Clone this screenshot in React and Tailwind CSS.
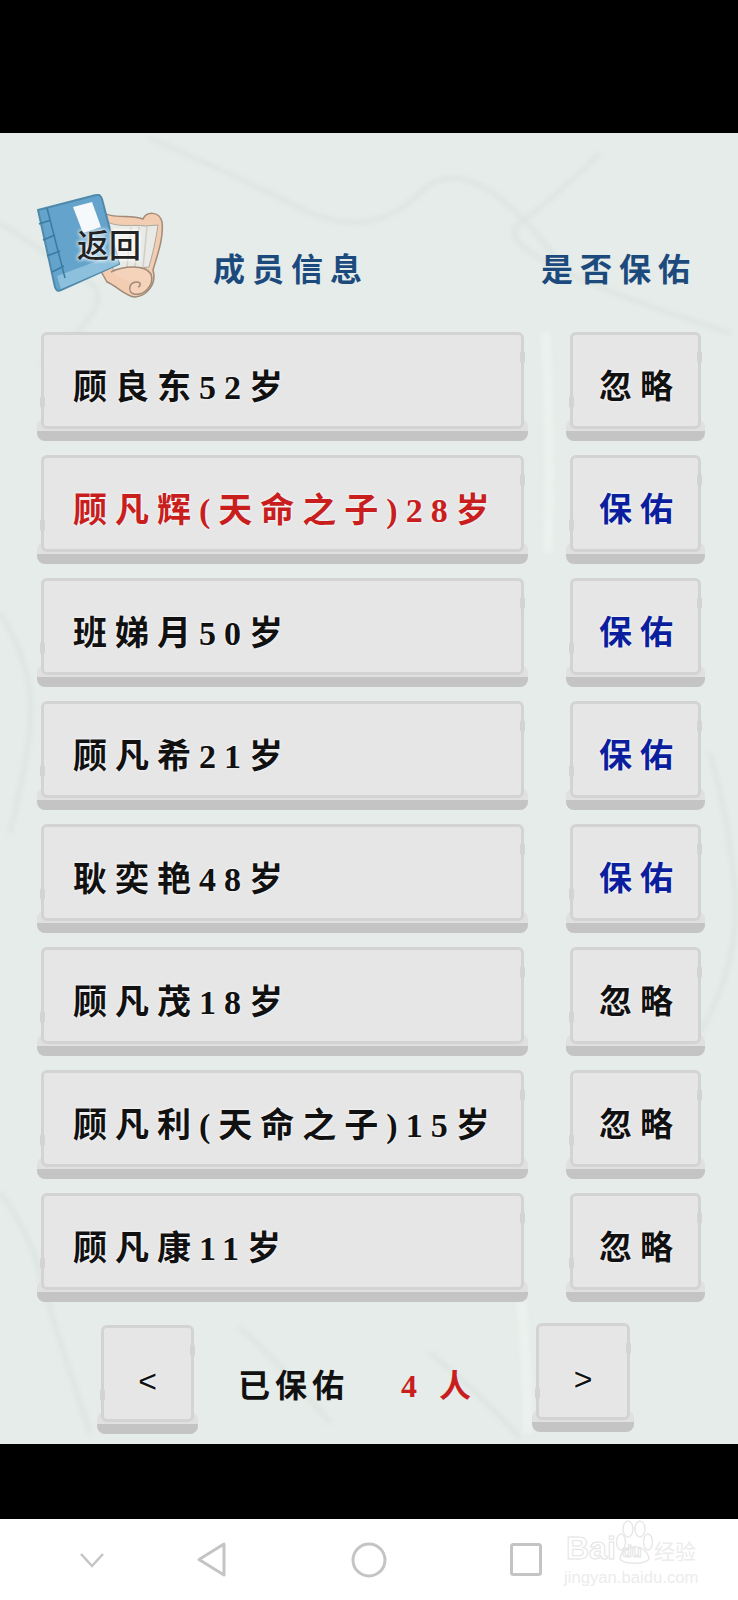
const CJK = "font-['Liberation_Serif','Noto_Sans_CJK_SC',serif]";

const rows = [
  { name: '顾良东52岁', action: '忽略' },
  { name: '顾凡辉(天命之子)28岁', action: '保佑', red: true },
  { name: '班娣月50岁', action: '保佑' },
  { name: '顾凡希21岁', action: '保佑' },
  { name: '耿奕艳48岁', action: '保佑' },
  { name: '顾凡茂18岁', action: '忽略' },
  { name: '顾凡利(天命之子)15岁', action: '忽略' },
  { name: '顾凡康11岁', action: '忽略' },
];

function Key({ className, children }) {
  return (
    <div className={'flex flex-col items-stretch ' + className}>
      <div className="relative z-10 mx-[4px] flex h-[97px] items-center rounded-[6px] border-[3px] border-[#d2d3d2] bg-[#e6e6e6]">
        <span className="absolute -right-[4px] top-[16px] h-[12px] w-[5px] rounded-full bg-[#d2d3d2]" />
        <span className="absolute -left-[4px] bottom-[18px] h-[12px] w-[5px] rounded-full bg-[#d2d3d2]" />
        {children}
      </div>
      <div className="-mt-[10px] h-[22px] rounded-[8px] border-t-[12px] border-[#dfe0df] bg-[#c3c4c3]" />
    </div>
  );
}

function Book() {
  return (
    <div className="relative h-[100px] w-[128px]">
      <svg width="128" height="106" viewBox="0 0 128 106" className="absolute left-0 top-0" fill="none">
        {/* scroll behind the book */}
        <path d="M60 16 C75 26 92 20 106 25 C109 18 122 16 125 28 C127 44 120 62 116 76 C120 90 110 102 98 103 C88 102 80 92 70 88 L60 70 Z" fill="#f2cdb2" stroke="#a08a78" strokeWidth="1.5" />
        <path d="M70 28 C84 34 96 30 108 32 L121 31 C119 46 115 62 112 73 L76 76 Z" fill="#e9e9e5" stroke="#a9a9a0" strokeWidth="1" />
        <path d="M94 33 L90 74 M102 33 L98 74 M110 33 L106 74" stroke="#cfcfc8" strokeWidth="1.5" />
        <path d="M74 78 C86 72 108 70 114 80 C118 92 106 102 97 100 C90 98 92 88 100 88 C104 88 104 92 101 93" fill="#f4d3ba" stroke="#a08a78" strokeWidth="1.5" />
        {/* book */}
        <path d="M1 16 L59 1 C62 0 64 2 65 5 L82 70 L24 96 C21 98 19 96 18 93 Z" fill="#64a3cb" stroke="#4f89ab" strokeWidth="2" />
        <path d="M20 82 L79 60 L82 70 L24 95 Z" fill="#8cc0dc" />
        <path d="M10 14 L28 84 M2 30 L14 26 M6 46 L18 41 M10 62 L23 57 M15 78 L27 72" stroke="#3a7ba2" strokeWidth="1.5" />
        <path d="M36 13 L55 8 L64 33 L46 39 Z" fill="#f6f9fb" />
      </svg>
      <span className="absolute left-[40px] top-[33px] text-[32px] font-medium leading-none text-[#222] [font-family:'Noto_Sans_CJK_SC',sans-serif] [text-shadow:0_0_4px_#fff,0_0_4px_#fff]">
        返回
      </span>
    </div>
  );
}

function BaiduMark() {
  return (
    <div className="relative h-[66px] w-[136px] text-[#ececec]">
      <svg width="38" height="44" viewBox="0 0 38 44" className="absolute left-[49px] top-0" fill="none" stroke="#e8e8e8" strokeWidth="1.5">
        <ellipse cx="6" cy="22" rx="4.5" ry="8" />
        <ellipse cx="13" cy="9" rx="5" ry="8" />
        <ellipse cx="25" cy="9" rx="5" ry="8" />
        <ellipse cx="33" cy="22" rx="4.5" ry="8" />
        <path d="M5 38 C8 24 30 22 34 38 C34 45 5 45 5 38 Z" />
      </svg>
      <span className="absolute left-0 top-[12px] text-[32px] font-bold leading-none text-transparent [-webkit-text-stroke:1px_#e4e4e4] [font-family:'Liberation_Sans',sans-serif]">Bai</span>
      <span className="absolute left-[56px] top-[24px] text-[16px] font-bold leading-none text-transparent [-webkit-text-stroke:1px_#e4e4e4] [font-family:'Liberation_Sans',sans-serif]">du</span>
      <span className="absolute left-[88px] top-[20px] text-[21px] leading-none [font-family:'Noto_Sans_CJK_SC',sans-serif]">经验</span>
      <span className="absolute -left-[2px] top-[50px] text-[16.7px] leading-none [font-family:'Liberation_Sans',sans-serif]">jingyan.baidu.com</span>
    </div>
  );
}

export default function App() {
  return (
    <div className={'flex h-[1600px] w-[738px] flex-col bg-black ' + CJK}>
      <div className="h-[133px]" />

      <main className="relative h-[1311px] overflow-hidden bg-[#e5ece9]">
        {/* paper texture */}
        <svg width="738" height="1311" viewBox="0 0 738 1311" className="absolute left-0 top-0 blur-[2px]" fill="none" stroke="#dae3df" strokeWidth="3">
          <path d="M150 5 Q230 40 300 75 T420 60 T560 130" />
          <path d="M0 90 Q60 130 90 150 T40 230" />
          <path d="M600 20 Q560 60 520 90 T730 200" />
          <path d="M0 480 Q25 520 30 560 T10 700" />
          <path d="M710 620 Q730 690 735 760 T700 900" />
          <path d="M0 1060 Q30 1100 40 1140 T90 1300" />
          <path d="M240 1195 Q290 1240 330 1290 M430 1220 Q480 1260 520 1305" />
          <path d="M520 1160 Q528 1230 528 1300 M545 200 Q552 300 548 420" stroke="#ecf1ee" strokeWidth="10" />
        </svg>

        <div className="relative flex h-[199px] items-start">
          <div className="ml-[37px] mt-[61px]">
            <Book />
          </div>
          <h2 className="ml-[48px] mt-[121px] text-[32px] font-bold leading-none tracking-[7px] text-[#1c4a7c]">成员信息</h2>
          <h2 className="ml-[172px] mt-[121px] text-[32px] font-bold leading-none tracking-[7px] text-[#1c4a7c]">是否保佑</h2>
        </div>

        <div className="relative flex flex-col gap-[14px]">
          {rows.map((row) => (
            <div key={row.name} className="flex">
              <Key className="ml-[37px] w-[491px]">
                <span className={'pl-[29px] pt-[14px] text-[34px] font-bold leading-none tracking-[8px] [text-shadow:0_0_3px_#fff] ' + (row.red ? 'text-[#c81e1e]' : 'text-[#111]')}>
                  {row.name}
                </span>
              </Key>
              <Key className="ml-[38px] w-[139px]">
                <span className={'w-full pl-[26px] pt-[14px] text-[33px] font-bold leading-none tracking-[8px] [text-shadow:0_0_3px_#fff] ' + (row.action === '保佑' ? 'text-[#0b1f9e]' : 'text-[#111]')}>
                  {row.action}
                </span>
              </Key>
            </div>
          ))}
        </div>

        <div className="relative ml-[97px] mt-[23px] flex items-start">
          <Key className="w-[101px]">
            <span className="w-full pt-[14px] text-center text-[32px] leading-none text-[#111] [font-family:'Liberation_Sans',sans-serif] [text-shadow:0_0_3px_#fff]">&lt;</span>
          </Key>
          <span className="ml-[40px] mt-[45px] text-[32px] font-bold leading-none tracking-[5px] text-[#111]">已保佑</span>
          <span className="ml-[52px] mt-[45px] text-[32px] font-bold leading-none tracking-[22px] text-[#c81e1e]">4人</span>
          <Key className="-mt-[2px] ml-[39px] w-[102px]">
            <span className="w-full pt-[14px] text-center text-[32px] leading-none text-[#111] [font-family:'Liberation_Sans',sans-serif] [text-shadow:0_0_3px_#fff]">&gt;</span>
          </Key>
        </div>
      </main>

      <div className="h-[75px]" />

      <nav className="flex h-[81px] items-start bg-white">
        <svg width="26" height="16" viewBox="0 0 26 16" className="ml-[79px] mt-[33px]" fill="none" stroke="#c4c4c4" strokeWidth="2.5">
          <path d="M2 2 L13 14 L24 2" />
        </svg>
        <svg width="30" height="35" viewBox="0 0 30 35" className="ml-[92px] mt-[23px]" fill="none" stroke="#c4c4c4" strokeWidth="3" strokeLinejoin="round">
          <path d="M27 2 L27 33 L2 17.5 Z" />
        </svg>
        <svg width="36" height="36" viewBox="0 0 36 36" className="ml-[124px] mt-[23px]" fill="none" stroke="#c4c4c4" strokeWidth="3">
          <circle cx="18" cy="18" r="16" />
        </svg>
        <svg width="32" height="33" viewBox="0 0 32 33" className="ml-[123px] mt-[24px]" fill="none" stroke="#c4c4c4" strokeWidth="3">
          <rect x="1.5" y="1.5" width="29" height="30" rx="2" />
        </svg>
        <div className="ml-[24px] mt-[1px]">
          <BaiduMark />
        </div>
      </nav>
    </div>
  );
}
